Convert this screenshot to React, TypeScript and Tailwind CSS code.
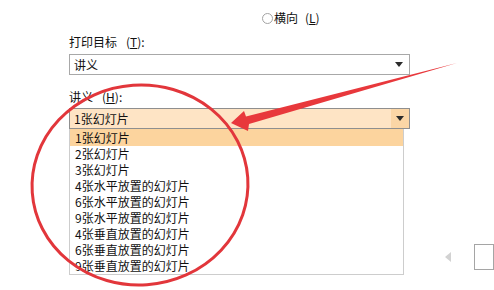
const items = [
  "1张幻灯片",
  "2张幻灯片",
  "3张幻灯片",
  "4张水平放置的幻灯片",
  "6张水平放置的幻灯片",
  "9张水平放置的幻灯片",
  "4张垂直放置的幻灯片",
  "6张垂直放置的幻灯片",
  "9张垂直放置的幻灯片",
];

function Caret() {
  return (
    <svg width="8" height="5" viewBox="0 0 8 5" className="block">
      <path d="M0 0h8L4 5z" fill="#2b2b2b" />
    </svg>
  );
}

export default function App() {
  return (
    <div
      className="relative w-[494px] h-[290px] overflow-hidden bg-white text-[12px] leading-none text-[#111]"
      style={{ fontFamily: '"Noto Sans CJK SC", "Noto Sans", sans-serif' }}
    >
      {/* orientation radio */}
      <div className="flex items-center pt-[12px] pl-[262px] h-[24px]">
        <span className="w-[11px] h-[11px] rounded-full border border-[#a3a3a3] bg-white" />
        <span className="ml-[1px]">横向</span>
        <span className="ml-[7px]">
          (<span className="underline">L</span>)
        </span>
      </div>

      <div className="pl-[69px]">
        {/* print target */}
        <div className="mt-[12px] flex items-center h-[12px]">
          <span>打印目标</span>
          <span className="ml-[9px]">
            (<span className="underline">T</span>):
          </span>
        </div>
        <div className="mt-[6px] w-[341px] h-[21px] border border-[#a8a8a8] bg-white flex items-center justify-between pl-[4px] pr-[6px]">
          <span>讲义</span>
          <Caret />
        </div>

        {/* handouts */}
        <div className="mt-[16px] flex items-center h-[12px]">
          <span>讲义</span>
          <span className="ml-[9px]">
            (<span className="underline">H</span>):
          </span>
        </div>
        <div className="mt-[5px] w-[341px] h-[21px] border border-[#8f8f8f] bg-[#fee4c5] flex items-center">
          <span className="flex-1 pl-[4px]">1张幻灯片</span>
          <span className="w-[18px] h-full bg-[#fbd6a6] flex items-center justify-center">
            <Caret />
          </span>
        </div>

        <div className="flex">
          <div className="w-[341px] border-x border-b border-[#cdcdcd] bg-white">
            {items.map((it, i) => (
              <div
                key={it}
                className={
                  i === 0
                    ? "h-[17px] pt-[1px] pl-[5px] flex items-center bg-[#fcd49e]"
                    : "h-[16px] pl-[5px] flex items-center"
                }
              >
                {it}
              </div>
            ))}
          </div>
          <div className="self-end mb-[13px] ml-[41px] w-0 h-0 border-y-[5px] border-y-transparent border-r-[6px] border-r-[#d2d2d2]" />
          <div className="self-end mb-[5px] ml-[23px] w-[20px] h-[26px] border border-[#a5a5a5] shrink-0" />
        </div>
      </div>

      {/* annotation overlay */}
      <svg
        width="494"
        height="290"
        viewBox="0 0 494 290"
        className="absolute inset-0 pointer-events-none"
      >
        <ellipse
          cx="140"
          cy="185"
          rx="108"
          ry="100"
          transform="rotate(-4 140 185)"
          fill="none"
          stroke="#e2363b"
          strokeWidth="3"
        />
        <path
          d="M231 123 L244 111 L246 116.5 L457 63 L249 124 L248 131 Z"
          fill="#e8383c"
        />
      </svg>
    </div>
  );
}
